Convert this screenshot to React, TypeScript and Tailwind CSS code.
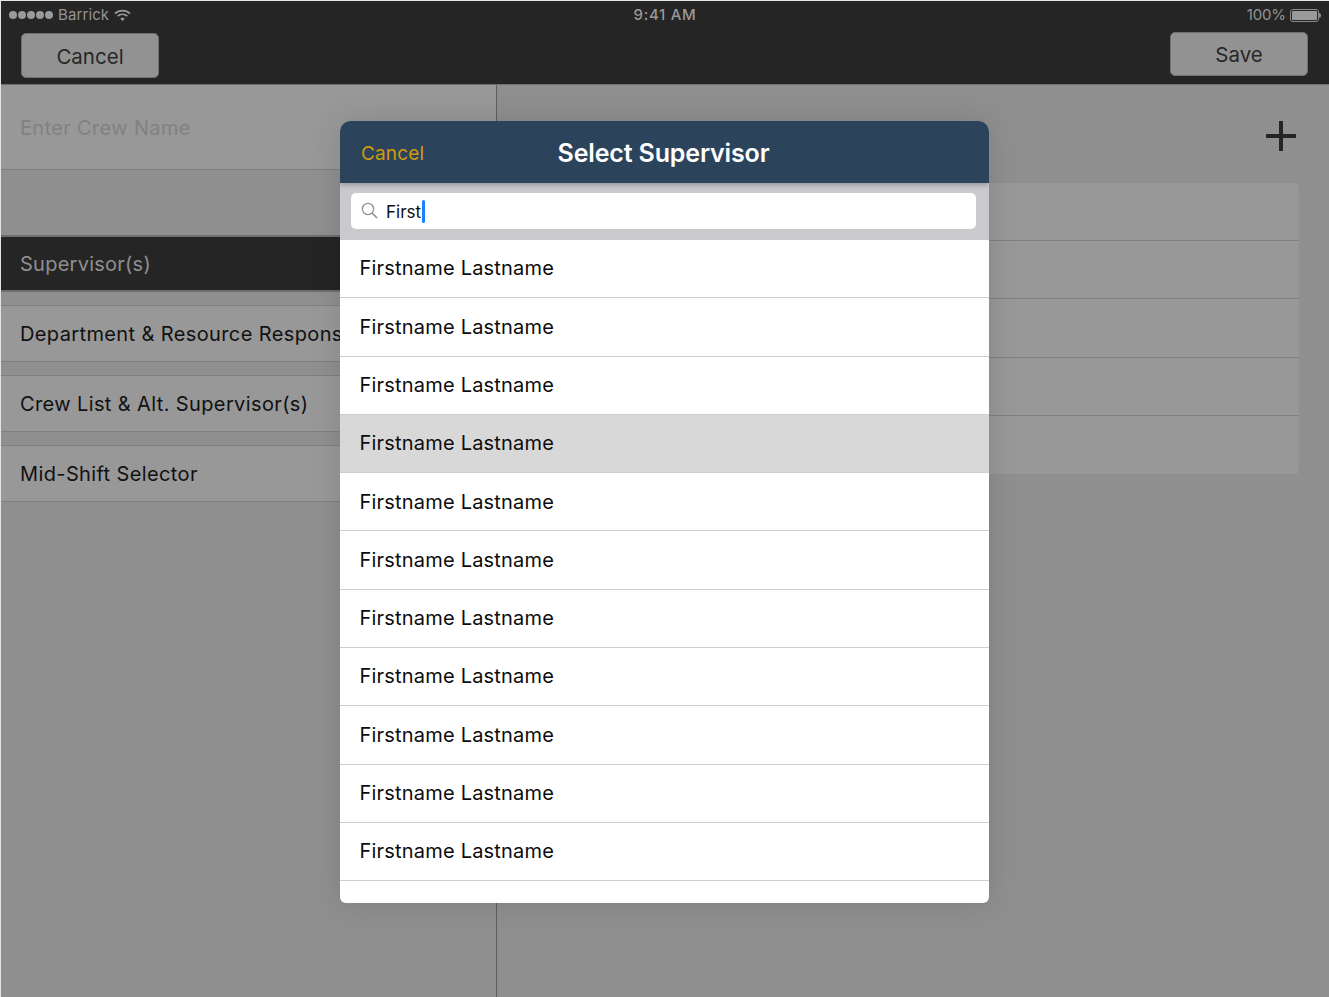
import React from "react";

const font = { fontFamily: "Inter, 'Liberation Sans', sans-serif" };

function LeftRow({ label }: { label: string }) {
  return (
    <div className="h-[57px] mb-[13px] flex items-center pl-[19px] bg-[#989898] border-t border-b border-[#7f7f7f] text-[20px] tracking-[0.38px] text-[#111] whitespace-nowrap overflow-hidden">
      {label}
    </div>
  );
}

function Wifi() {
  return (
    <svg width="17" height="13" viewBox="0 0 17 13" className="ml-[5px]" fill="none" stroke="#9a9a9a">
      <path d="M1 4.6C5.2.6 11.8.6 16 4.6" strokeWidth="1.6" />
      <path d="M3.6 7.2c2.8-2.6 7-2.6 9.8 0" strokeWidth="1.6" />
      <path d="M6.2 9.6c1.3-1.1 3.3-1.1 4.6 0L8.5 12z" fill="#9a9a9a" stroke="none" />
    </svg>
  );
}

export default function App() {
  const rows = Array.from({ length: 11 });
  return (
    <div className="relative w-[1329px] h-[997px] overflow-hidden bg-[#8f8f8f] border-l border-t border-[#e4e4e4] flex flex-col" style={font}>
      <header className="h-[84px] shrink-0 bg-[#252525] border-b border-[#6e6e6e] relative flex flex-col">
        <div className="h-[28px] shrink-0 flex items-center justify-between pl-[8px] pr-[8px] text-[15px] text-[#949494]">
          <div className="flex items-center w-[300px]">
            <div className="flex gap-[1px]">
              {[0, 1, 2, 3, 4].map((i) => (
                <span key={i} className="w-[8px] h-[8px] rounded-full bg-[#9a9a9a]" />
              ))}
            </div>
            <span className="ml-[5px] tracking-[0.1px]">Barrick</span>
            <Wifi />
          </div>
          <span className="text-[#999] font-medium tracking-[0.7px]">9:41 AM</span>
          <div className="flex items-center justify-end w-[300px]">
            <span className="tracking-[-0.1px]">100%</span>
            <div className="ml-[4px] w-[29px] h-[13px] border border-[#8a8a8a] rounded-[3px] p-[1px]">
              <div className="w-full h-full bg-[#9a9a9a] rounded-[1px]" />
            </div>
            <div className="w-[2px] h-[5px] bg-[#8a8a8a] rounded-r-sm" />
          </div>
        </div>
        <div className="flex justify-between items-start pl-[20px] pr-[21px]">
          <button className="w-[138px] h-[45px] mt-[4px] pt-[3px] rounded-[5px] bg-[#929292] border border-[#6f6f6f] text-[20.5px] text-[#272727]">Cancel</button>
          <button className="w-[138px] h-[44px] mt-[3px] pt-[3px] rounded-[5px] bg-[#929292] border border-[#6f6f6f] text-[20.5px] text-[#272727]">Save</button>
        </div>
      </header>

      <main className="flex-1 flex min-h-0">
        <aside className="w-[496px] shrink-0 border-r border-[#5e5e5e]">
          <div className="h-[85px] pt-[2px] bg-[#989898] border-b border-[#7f7f7f] flex items-center pl-[19px] text-[20px] text-[#818181] tracking-[0.35px]">
            Enter Crew Name
          </div>
          <div className="h-[65px]" />
          <div className="h-[57px] mb-[13px] flex items-center pl-[19px] bg-[#252525] border-t-2 border-b-2 border-[#6e6e6e] text-[20px] tracking-[0.25px] text-[#8f8f8f]">
            Supervisor(s)
          </div>
          <LeftRow label="Department & Resource Responsibilities" />
          <LeftRow label="Crew List & Alt. Supervisor(s)" />
          <LeftRow label="Mid-Shift Selector" />
        </aside>

        <section className="flex-1 flex flex-col items-end pr-[30px]">
          <div className="h-[98px] w-full flex justify-end items-start pt-[36px]">
            <svg width="30" height="30" viewBox="0 0 30 30" className="mr-[3px]">
              <path d="M13 0h4v30h-4zM0 13h30v4H0z" fill="#252525" />
            </svg>
          </div>
          <div className="w-[400px] h-[291px] rounded-[4px] bg-[#989898] flex flex-col">
            {[0, 1, 2, 3, 4].map((i) => (
              <div key={i} className={`h-[58.2px] ${i < 4 ? "border-b border-[#7f7f7f]" : ""}`} />
            ))}
          </div>
        </section>
      </main>

      <div className="absolute left-[339px] top-[120px] w-[649px] h-[782px] rounded-t-[10px] rounded-b-[6px] overflow-hidden bg-white flex flex-col shadow-[0_0_30px_rgba(0,0,0,0.12)]">
        <div className="relative z-10 h-[62px] shrink-0 bg-[#2c435c] flex items-center justify-center shadow-[0_1px_6px_rgba(0,0,0,0.35)]">
          <span className="absolute left-[21px] top-[21px] text-[19px] tracking-[0.15px] leading-[24px] text-[#d19a0b]">Cancel</span>
          <span className="text-[25px] font-semibold text-white tracking-[-0.15px] mt-[3px] -translate-x-[1px]">Select Supervisor</span>
        </div>
        <div className="h-[57px] shrink-0 bg-[#c9c9ce] px-[11px] pt-[10px]">
          <div className="h-[36px] w-[625px] bg-white rounded-[5px] flex items-center pl-[10px]">
            <svg width="17" height="17" viewBox="0 0 17 17" fill="none" stroke="#8e8e93" strokeWidth="1.3" className="-mt-[2px]">
              <circle cx="7" cy="7" r="5.6" />
              <path d="M11 11l5 5" strokeWidth="1.6" />
            </svg>
            <span className="ml-[8px] mt-[4px] text-[17px] text-[#111]">First</span>
            <span className="ml-[1px] w-[2.5px] h-[23px] bg-[#1a82fb] rounded-full" />
          </div>
        </div>
        {rows.map((_, i) => (
          <div
            key={i}
            className={`h-[58.3px] shrink-0 flex items-center pl-[19.5px] pb-[0.5px] text-[20px] tracking-[0.2px] text-[#0c0c0c] border-b border-[#cfcfcf] ${i === 3 ? "bg-[#d8d8d8]" : "bg-white"}`}
          >
            Firstname Lastname
          </div>
        ))}
      </div>
    </div>
  );
}
